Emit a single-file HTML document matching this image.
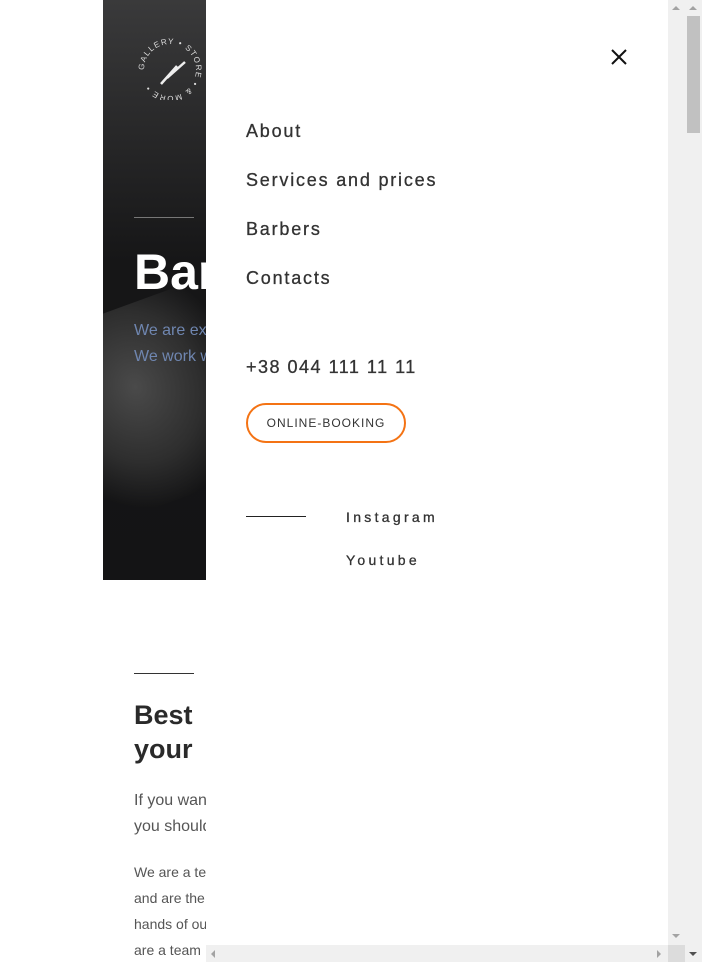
<!DOCTYPE html>
<html><head><style>
*{margin:0;padding:0;box-sizing:border-box}
body{width:702px;height:962px;overflow:hidden;background:#fff;position:relative;font-family:"Liberation Sans",sans-serif}
.hero{position:absolute;left:103px;top:0;width:103px;height:580px;background:linear-gradient(180deg,#3a3a3b 0%,#2a2a2b 20%,#161617 45%,#141415 100%);overflow:hidden}
.hero .sh{position:absolute;left:-30px;top:300px;width:170px;height:200px;background:radial-gradient(ellipse at 40% 40%,#4a4a4a 0%,#2e2e2e 45%,transparent 72%);transform:rotate(-20deg)}
.abs{position:absolute;white-space:nowrap}
.panel{position:absolute;left:206px;top:0;width:479px;height:962px;background:#fff}
.nav{position:absolute;left:246px;font-size:18px;letter-spacing:1.8px;color:#333;-webkit-text-stroke:0.3px #333}
.vs{position:absolute;left:668px;top:0;width:17px;height:945px;background:#f0f0f0}
.hs{position:absolute;left:206px;top:945px;width:462px;height:17px;background:#f0f0f0}
.corner{position:absolute;left:668px;top:945px;width:17px;height:17px;background:#dcdcdc}
.os{position:absolute;left:685px;top:0;width:17px;height:962px;background:#f0f0f0}
.thumb{position:absolute;left:687px;top:16px;width:13px;height:117px;background:#c1c1c1}
.tri{position:absolute;width:0;height:0}
</style></head><body>
<div class="hero"><div class="sh"></div>
<svg class="abs" style="left:30px;top:36px" width="74" height="64" viewBox="0 0 74 64">
<defs><path id="c" d="M37,34 m-26,0 a26,26 0 1,1 52,0 a26,26 0 1,1 -52,0"/></defs>
<text font-size="8" fill="#ddd" letter-spacing="1.2" font-family="Liberation Sans"><textPath href="#c" startOffset="0">GALLERY • STORE • &amp; MORE •</textPath></text>
<path d="M28,48 L44,30 M34,42 L52,26" stroke="#eee" stroke-width="2.5"/>
</svg>
<div class="abs" style="left:31px;top:217px;width:60px;height:1px;background:#777"></div>
<div class="abs" style="left:31px;top:243px;font-size:50px;font-weight:bold;color:#fff">Barbershop</div>
<div class="abs" style="left:31px;top:322px;font-size:16px;color:#6f86b0">We are experts</div>
<div class="abs" style="left:31px;top:348px;font-size:16px;color:#6f86b0">We work with</div>
</div>
<div class="abs" style="left:134px;top:673px;width:60px;height:1px;background:#333"></div>
<div class="abs" style="left:134px;top:698px;font-size:27px;font-weight:bold;color:#2a2a2a;line-height:34px">Best<br>your</div>
<div class="abs" style="left:134px;top:788px;font-size:16px;color:#555;line-height:26px">If you want<br>you should</div>
<div class="abs" style="left:134px;top:859px;font-size:14px;color:#555;line-height:26px">We are a team<br>and are the<br>hands of our<br>are a team</div>
<div class="panel"></div>
<svg class="abs" style="left:610px;top:48px" width="18" height="18"><path d="M2,2 L16,16 M16,2 L2,16" stroke="#111" stroke-width="2"/></svg>
<div class="nav" style="top:121px">About</div>
<div class="nav" style="top:170px">Services and prices</div>
<div class="nav" style="top:219px">Barbers</div>
<div class="nav" style="top:268px">Contacts</div>
<div class="nav" style="top:357px;letter-spacing:1.5px">+38 044 111 11 11</div>
<div class="abs" style="left:246px;top:403px;width:160px;height:40px;border:2px solid #f47314;border-radius:20px;font-size:12px;letter-spacing:1px;color:#333;text-align:center;line-height:36px">ONLINE-BOOKING</div>
<div class="abs" style="left:246px;top:516px;width:60px;height:1px;background:#222"></div>
<div class="abs" style="left:346px;top:509px;font-size:14px;letter-spacing:3.3px;color:#333;-webkit-text-stroke:0.3px #333">Instagram</div>
<div class="abs" style="left:346px;top:552px;font-size:14px;letter-spacing:3.3px;color:#333;-webkit-text-stroke:0.3px #333">Youtube</div>
<div class="vs"></div><div class="hs"></div><div class="corner"></div>
<div class="tri" style="left:672px;top:6px;border:4px solid transparent;border-bottom:4px solid #a3a3a3;border-top:0"></div>
<div class="tri" style="left:672px;top:934px;border:4px solid transparent;border-top:4px solid #a3a3a3;border-bottom:0"></div>
<div class="tri" style="left:211px;top:950px;border:4px solid transparent;border-right:4px solid #a3a3a3;border-left:0"></div>
<div class="tri" style="left:657px;top:950px;border:4px solid transparent;border-left:4px solid #a3a3a3;border-right:0"></div>
<div class="os"></div><div class="thumb"></div>
<div class="tri" style="left:689px;top:6px;border:4px solid transparent;border-bottom:4px solid #a3a3a3;border-top:0"></div>
<div class="tri" style="left:689px;top:952px;border:4px solid transparent;border-top:4px solid #505050;border-bottom:0"></div>
</body></html>
